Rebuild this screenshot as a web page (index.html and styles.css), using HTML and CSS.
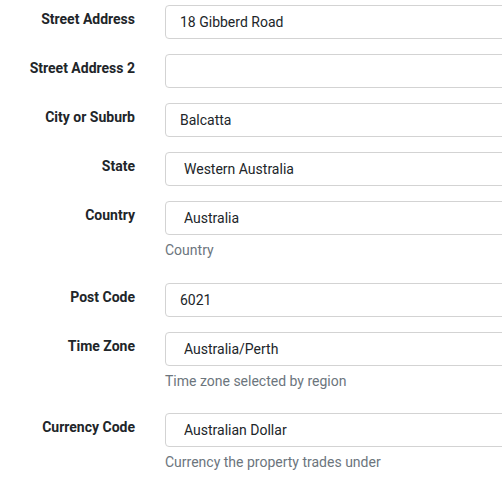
FILE: index.html
```html
<!DOCTYPE html>
<html lang="en">
<head>
<meta charset="utf-8">
<title>Property address</title>
<link rel="stylesheet" href="styles.css">
</head>
<body>
<form class="form">
  <div class="form-group">
    <label class="control-label" for="street1">Street Address</label>
    <div class="control"><input class="form-control" id="street1" type="text" value="18 Gibberd Road"></div>
  </div>
  <div class="form-group">
    <label class="control-label" for="street2">Street Address 2</label>
    <div class="control"><input class="form-control" id="street2" type="text" value=""></div>
  </div>
  <div class="form-group">
    <label class="control-label" for="city">City or Suburb</label>
    <div class="control"><input class="form-control" id="city" type="text" value="Balcatta"></div>
  </div>
  <div class="form-group">
    <label class="control-label" for="state">State</label>
    <div class="control"><select class="form-control select" id="state"><option>Western Australia</option></select></div>
  </div>
  <div class="form-group">
    <label class="control-label" for="country">Country</label>
    <div class="control">
      <select class="form-control select" id="country"><option>Australia</option></select>
      <span class="help-block">Country</span>
    </div>
  </div>
  <div class="form-group">
    <label class="control-label" for="postcode">Post Code</label>
    <div class="control"><input class="form-control" id="postcode" type="text" value="6021"></div>
  </div>
  <div class="form-group">
    <label class="control-label" for="tz">Time Zone</label>
    <div class="control">
      <select class="form-control select" id="tz"><option>Australia/Perth</option></select>
      <span class="help-block">Time zone selected by region</span>
    </div>
  </div>
  <div class="form-group">
    <label class="control-label" for="currency">Currency Code</label>
    <div class="control">
      <select class="form-control select" id="currency"><option>Australian Dollar</option></select>
      <span class="help-block">Currency the property trades under</span>
    </div>
  </div>
</form>
</body>
</html>
```

FILE: styles.css
```css
html, body {
  margin: 0;
  padding: 0;
  background: #ffffff;
  overflow: hidden;
}

body {
  font-family: Roboto, "Liberation Sans", Arial, sans-serif;
  font-size: 14px;
  line-height: 20px;
  color: #212529;
}

.form {
  width: 580px;
  padding-top: 5px;
}

.form-group {
  display: grid;
  grid-template-columns: 135px 1fr;
  column-gap: 30px;
  margin-bottom: 15px;
}

.control-label {
  text-align: right;
  font-weight: 700;
  padding-top: 4px;
  color: #212529;
}

.control {
  display: flex;
  flex-direction: column;
}

.form-control {
  box-sizing: border-box;
  height: 34px;
  width: 100%;
  margin: 0;
  padding: 0 14px;
  border: 1px solid #d3d3d3;
  border-radius: 4px;
  background: #ffffff;
  font-family: inherit;
  font-size: 14px;
  color: #212529;
  outline: none;
}

.select {
  appearance: none;
  -webkit-appearance: none;
  padding-left: 18px;
}

.help-block {
  display: block;
  margin-top: 5px;
  margin-bottom: 7.5px;
  color: #6c757d;
}
```
